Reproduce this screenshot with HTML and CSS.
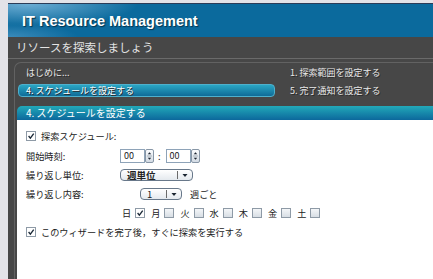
FILE: index.html
```html
<!DOCTYPE html>
<html lang="ja">
<head>
  <meta charset="UTF-8">
  <title>IT Resource Management</title>
  <link rel="stylesheet" href="styles.css">
</head>
<body>
  <div class="app">
    <header class="titlebar">
      <h1>IT Resource Management</h1>
    </header>
    <div class="subtitle">リソースを探索しましょう</div>

    <div class="main">
      <div class="panel">
        <div class="steps">
          <div class="step">はじめに...</div>
          <div class="step right">1. 探索範囲を設定する</div>
          <div class="step current">4. スケジュールを設定する</div>
          <div class="step right">5. 完了通知を設定する</div>
        </div>

        <section class="page">
          <div class="page-head">4. スケジュールを設定する</div>
          <div class="form">
            <div class="row first">
              <span class="box on"><svg viewBox="0 0 10 10"><path d="M2 5 L4.2 7.6 L8.4 2" /></svg></span>
              <span>探索スケジュール:</span>
            </div>

            <div class="row">
              <span class="label">開始時刻:</span>
              <span class="field">00</span>
              <span class="spin-btn"><svg viewBox="0 0 8 14"><path d="M2 5 L4 2.5 L6 5 Z M2 9 L4 11.5 L6 9 Z" /><line x1="1" y1="7" x2="7" y2="7" /></svg></span>
              <span class="colon">:</span>
              <span class="field">00</span>
              <span class="spin-btn"><svg viewBox="0 0 8 14"><path d="M2 5 L4 2.5 L6 5 Z M2 9 L4 11.5 L6 9 Z" /><line x1="1" y1="7" x2="7" y2="7" /></svg></span>
            </div>

            <div class="row">
              <span class="label">繰り返し単位:</span>
              <span class="select wide"><span class="value bold">週単位</span><span class="arrow"><svg viewBox="0 0 8 6"><path d="M1.5 1.5 L6.5 1.5 L4 4.5 Z" /></svg></span></span>
            </div>

            <div class="row">
              <span class="label">繰り返し内容:</span>
              <span class="select narrow"><span class="value">1</span><span class="arrow"><svg viewBox="0 0 8 6"><path d="M1.5 1.5 L6.5 1.5 L4 4.5 Z" /></svg></span></span>
              <span class="unit">週ごと</span>
            </div>

            <div class="row days">
              <span class="day">日</span><span class="box on"><svg viewBox="0 0 10 10"><path d="M2 5 L4.2 7.6 L8.4 2" /></svg></span>
              <span class="day">月</span><span class="box"></span>
              <span class="day">火</span><span class="box"></span>
              <span class="day">水</span><span class="box"></span>
              <span class="day">木</span><span class="box"></span>
              <span class="day">金</span><span class="box"></span>
              <span class="day">土</span><span class="box"></span>
            </div>

            <div class="row">
              <span class="box on"><svg viewBox="0 0 10 10"><path d="M2 5 L4.2 7.6 L8.4 2" /></svg></span>
              <span>このウィザードを完了後，すぐに探索を実行する</span>
            </div>
          </div>
        </section>
      </div>
    </div>
  </div>
</body>
</html>
```

FILE: styles.css
```css
body {
  margin: 0;
  height: 279px;
  overflow: hidden;
  background-color: #e3e3e8;
  font-family: "Noto Sans CJK JP", sans-serif;
}
.app {
  margin: 3px 0 0 8px;
  border-top: 1px solid #2b3c58;
}
.titlebar {
  height: 33px;
  display: flex;
  align-items: center;
  padding-left: 14px;
  background:
    radial-gradient(ellipse 110px 22px at 20px 0px, rgba(140, 195, 230, 0.75), rgba(140, 195, 230, 0) 100%),
    radial-gradient(ellipse 70px 14px at 0px 33px, rgba(90, 160, 205, 0.6), rgba(90, 160, 205, 0) 100%),
    #0b6a9d;
}
.titlebar h1 {
  margin: 0;
  font-family: "Liberation Sans", Arial, sans-serif;
  font-size: 14.5px;
  font-weight: bold;
  color: #ffffff;
  text-shadow: 1px 1px 1px #06324a;
}
.subtitle {
  height: 21px;
  line-height: 21px;
  padding-left: 8px;
  font-size: 11.5px;
  color: #e4e4e4;
  background-color: #474747;
  border-bottom: 1px solid #6a6a6a;
}
.main {
  background-color: #474747;
  padding: 3px 0 0 6px;
}
.panel {
  border-top: 1px solid #626262;
  border-left: 1px solid #626262;
  border-radius: 7px 0 0 0;
  padding: 3px 0 0 2px;
}
.steps {
  display: grid;
  grid-template-columns: 258px 1fr;
  row-gap: 4px;
  margin-bottom: 8px;
}
.step {
  height: 14px;
  line-height: 14px;
  padding-left: 9px;
  font-size: 9px;
  color: #e8e8e8;
  text-shadow: 1px 1px 0 #2a2a2a;
  white-space: nowrap;
}
.step.right {
  padding-left: 15px;
}
.step.current {
  box-sizing: border-box;
  height: 13px;
  line-height: 11px;
  margin-left: 1px;
  padding-left: 7px;
  border: 1px solid #4fb0cc;
  border-radius: 4px;
  background: linear-gradient(#2aa7c4, #0f6b98);
  color: #ffffff;
}
.page-head {
  height: 14px;
  line-height: 14px;
  padding-left: 9px;
  font-size: 10px;
  color: #ffffff;
  border-radius: 5px 0 0 0;
  background: linear-gradient(#22a9b9, #0c689c);
}
.form {
  height: 154px;
  padding: 6px 0 0 9px;
  background-color: #ffffff;
  font-size: 9.2px;
  color: #222222;
}
.row {
  display: flex;
  align-items: center;
  height: 19px;
  white-space: nowrap;
}
.row.first {
  height: 20px;
}
.label {
  width: 94px;
}
.box {
  box-sizing: border-box;
  width: 10px;
  height: 10px;
  margin-right: 5px;
  border: 1px solid #8e9aa6;
  background: linear-gradient(#f4f6f8, #d8dee4);
}
.box svg {
  display: block;
  width: 8px;
  height: 8px;
}
.box svg path {
  fill: none;
  stroke: #1c2a38;
  stroke-width: 1.7;
}
.box.on {
  background: #ffffff;
}
.field {
  box-sizing: border-box;
  width: 25px;
  height: 14px;
  line-height: 12px;
  padding-left: 3px;
  font-size: 9px;
  border: 1px solid #8ea3b8;
  background-color: #ffffff;
}
.spin-btn {
  box-sizing: border-box;
  width: 9px;
  height: 14px;
  border: 1px solid #8796a6;
  border-radius: 2px;
  background: linear-gradient(#fbfcfe, #d3dbe4);
}
.spin-btn svg {
  display: block;
  width: 7px;
  height: 12px;
}
.spin-btn path {
  fill: #1c2530;
}
.spin-btn line {
  stroke: #9aa6b2;
  stroke-width: 1;
}
.colon {
  margin: 0 5px 0 4px;
}
.select {
  box-sizing: border-box;
  display: flex;
  align-items: center;
  height: 12px;
  border: 1px solid #68788a;
  border-radius: 4px;
  background: linear-gradient(#ffffff, #e4e9ee);
}
.select.wide {
  width: 73px;
}
.select.narrow {
  width: 42px;
  margin-left: 20px;
}
.select .value {
  padding-left: 6px;
  font-size: 9.5px;
  line-height: 10px;
}
.select .bold {
  font-weight: bold;
}
.select .arrow {
  margin-left: auto;
  height: 8px;
  padding: 0 3px 0 3px;
  border-left: 1px solid #6b6b6b;
}
.select .arrow svg {
  display: block;
  width: 8px;
  height: 7px;
  margin-top: 1px;
}
.select .arrow path {
  fill: #1a2430;
}
.unit {
  margin-left: 8px;
}
.days {
  padding-left: 96px;
}
.day {
  margin-right: 4px;
}
.days .box {
  margin-right: 6px;
}
```
